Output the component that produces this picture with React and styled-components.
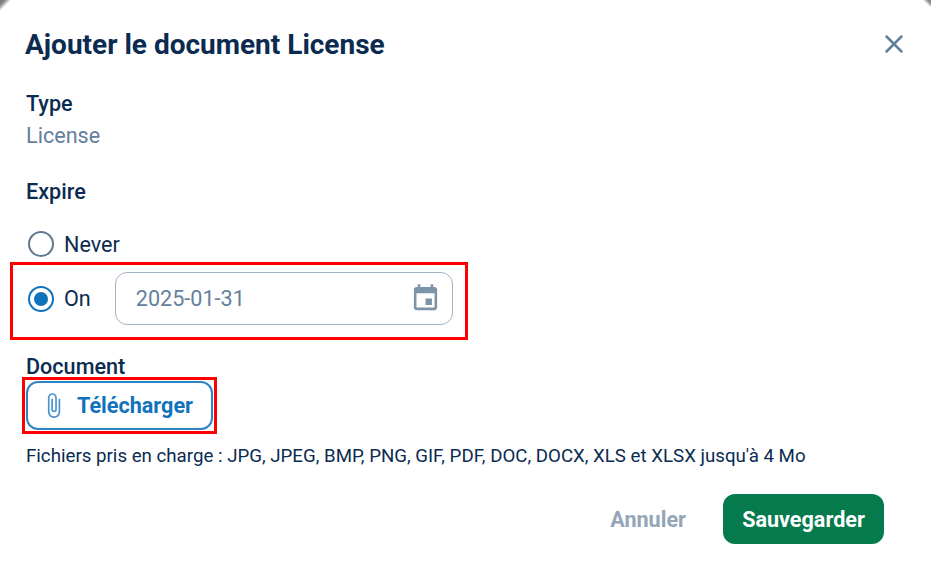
import React from 'react'
import styled, { createGlobalStyle } from 'styled-components'
import { X } from 'lucide-react'

const GlobalStyle = createGlobalStyle`
  html, body {
    margin: 0;
    padding: 0;
    background: #fff;
  }
  body {
    font-family: Roboto, "Liberation Sans", sans-serif;
  }
`

const Modal = styled.div`
  position: relative;
  width: 931px;
  height: 571px;
  box-sizing: border-box;
  padding: 25px 25px 0 26px;
  background: #fff;
  color: #0b2b50;
  display: flex;
  flex-direction: column;

  /* bit of the dark backdrop showing behind the rounded corners */
  &::before,
  &::after {
    content: '';
    position: absolute;
    top: 0;
    width: 12px;
    height: 12px;
  }
  &::before {
    left: 0;
    background: linear-gradient(135deg, #6f6f6f 0, #8c8c8c 4px, #fff 8px);
  }
  &::after {
    right: 0;
    width: 8px;
    height: 6px;
    background: linear-gradient(225deg, #777 0, #999 3px, #fff 6px);
  }
`

const Header = styled.div`
  display: flex;
  align-items: center;
  justify-content: space-between;
  height: 38px;
  margin-right: -3px;
`

const Title = styled.h1`
  margin: 0 0 0 -1px;
  font-size: 28px;
  font-weight: 700;
  color: #0b2b50;
`

const CloseButton = styled.button`
  border: 0;
  padding: 0;
  background: none;
  color: #5f7f9e;
  display: flex;
`

const Label = styled.div`
  font-size: 21.6px;
  font-weight: 500;
  line-height: 24px;
  margin-top: ${(p) => p.$top}px;
`

const Value = styled.div`
  font-size: 21.6px;
  line-height: 24px;
  margin-top: 8px;
  color: #64809c;
`

const RadioRow = styled.div`
  display: flex;
  align-items: center;
  height: 26px;
  margin-top: 27px;
  font-size: 21.6px;
`

const MarkedRow = styled(RadioRow)`
  width: 458px;
  height: 78px;
  box-sizing: border-box;
  margin: 5px 0 0 -16px;
  padding: 0 0 5px 13px;
  border: 3px solid #f00;
`

const Radio = styled.span`
  width: 26px;
  height: 26px;
  box-sizing: border-box;
  border-radius: 50%;
  border: 2.5px solid ${(p) => (p.$checked ? '#0f72ba' : '#62788e')};
  margin: 0 10px 0 2px;
  display: flex;
  align-items: center;
  justify-content: center;
  &::after {
    content: '';
    display: ${(p) => (p.$checked ? 'block' : 'none')};
    width: 14px;
    height: 14px;
    border-radius: 50%;
    background: #0f72ba;
  }
`

const DateField = styled.div`
  width: 338px;
  height: 53px;
  box-sizing: border-box;
  margin-left: 24px;
  padding: 0 11px 0 20px;
  border: 1.5px solid #a3b3c4;
  border-radius: 12px;
  display: flex;
  align-items: center;
  justify-content: space-between;
  color: #64809c;
`

const UploadMark = styled.div`
  width: 195px;
  height: 57px;
  box-sizing: border-box;
  margin: -2px 0 0 -4px;
  padding: 1px;
  border: 3px solid #f00;
`

const UploadButton = styled.button`
  width: 187px;
  height: 49px;
  box-sizing: border-box;
  border: 2px solid #2f83c5;
  border-radius: 12px;
  background: #fff;
  color: #0f72ba;
  font: 700 21.6px Roboto, sans-serif;
  display: flex;
  align-items: center;
  gap: 10px;
  padding: 0 0 0 12px;
`

const Hint = styled.div`
  font-size: 18.7px;
  line-height: 22px;
  margin-top: 11px;
`

const Footer = styled.div`
  display: flex;
  justify-content: flex-end;
  align-items: center;
  gap: 37px;
  margin-top: 27px;
  padding-right: 22px;
`

const CancelButton = styled.button`
  border: 0;
  padding: 0;
  background: none;
  color: #94a5b8;
  font: 700 21.6px Roboto, sans-serif;
`

const SaveButton = styled.button`
  width: 161px;
  height: 50px;
  border: 0;
  border-radius: 12px;
  background: #047a4d;
  color: #fff;
  font: 700 21.6px Roboto, sans-serif;
`

const CalendarIcon = () => (
  <svg width="31" height="31" viewBox="0 0 24 24" fill="#7d93a8">
    <path d="M17 12h-5v5h5v-5zM16 1v2H8V1H6v2H5c-1.11 0-1.99.9-1.99 2L3 19c0 1.1.89 2 2 2h14c1.1 0 2-.9 2-2V5c0-1.1-.9-2-2-2h-1V1h-2zm3 18H5V8h14v11z" />
  </svg>
)

const ClipIcon = () => (
  <svg width="27" height="27" viewBox="0 0 24 24" fill="#4a93cc">
    <path d="M16.5 6v11.5c0 2.21-1.79 4-4 4s-4-1.79-4-4V5c0-1.38 1.12-2.5 2.5-2.5s2.5 1.12 2.5 2.5v10.5c0 .55-.45 1-1 1s-1-.45-1-1V6H10v9.5c0 1.38 1.12 2.5 2.5 2.5s2.5-1.12 2.5-2.5V5c0-2.21-1.79-4-4-4S7 2.79 7 5v12.5c0 3.04 2.46 5.5 5.5 5.5s5.5-2.46 5.5-5.5V6h-1.5z" />
  </svg>
)

export default function App() {
  return (
    <>
      <GlobalStyle />
      <Modal>
        <Header>
          <Title>Ajouter le document License</Title>
          <CloseButton aria-label="Fermer">
            <X size={30} strokeWidth={2} />
          </CloseButton>
        </Header>
        <Label $top={29}>Type</Label>
        <Value>License</Value>
        <Label $top={32}>Expire</Label>
        <RadioRow>
          <Radio />
          Never
        </RadioRow>
        <MarkedRow>
          <Radio $checked />
          On
          <DateField>
            2025-01-31
            <CalendarIcon />
          </DateField>
        </MarkedRow>
        <Label $top={15}>Document</Label>
        <UploadMark>
          <UploadButton>
            <ClipIcon />
            Télécharger
          </UploadButton>
        </UploadMark>
        <Hint>Fichiers pris en charge : JPG, JPEG, BMP, PNG, GIF, PDF, DOC, DOCX, XLS et XLSX jusqu'à 4 Mo</Hint>
        <Footer>
          <CancelButton>Annuler</CancelButton>
          <SaveButton>Sauvegarder</SaveButton>
        </Footer>
      </Modal>
    </>
  )
}
